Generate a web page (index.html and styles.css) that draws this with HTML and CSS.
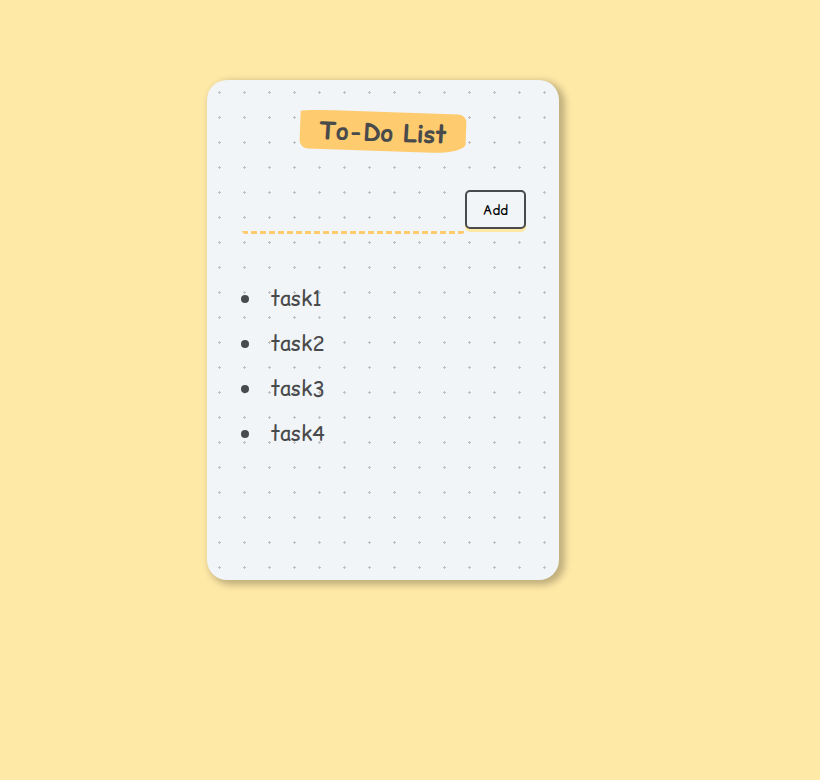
FILE: index.html
```html
<!DOCTYPE html>
<html lang="en">
<head>
<meta charset="utf-8">
<title>To-Do List</title>
<link rel="stylesheet" href="styles.css">
</head>
<body>
<main class="card">
  <h1 class="title"><span class="title-text">To-Do List</span></h1>
  <form class="entry">
    <input class="entry-input" type="text" aria-label="Task">
    <button class="entry-add" type="button"><span class="add-text">Add</span></button>
  </form>
  <ul class="tasks">
    <li class="task"><span class="task-text">task1</span></li>
    <li class="task"><span class="task-text">task2</span></li>
    <li class="task"><span class="task-text">task3</span></li>
    <li class="task"><span class="task-text">task4</span></li>
  </ul>
</main>
</body>
</html>
```
FILE: styles.css
```css
* {
  box-sizing: border-box;
}

body {
  margin: 0;
  min-height: 100vh;
  padding: 80px 0 0 207px;
  background: #ffe9a7;
  color: #494a4b;
  font-family: "Comic Sans MS", "Comic Relief", cursive;
}

.card {
  width: 352px;
  height: 500px;
  padding: 32px 33px 0 35px;
  border-radius: 20px;
  background-color: #f1f5f8;
  background-image: radial-gradient(#bfc0c1 7.2%, transparent 0);
  background-size: 25px 25px;
  box-shadow: 4px 3px 7px 2px #00000040;
  display: flex;
  flex-direction: column;
}

.title {
  align-self: center;
  display: flex;
  align-items: center;
  justify-content: center;
  width: 166px;
  height: 39px;
  margin: 0 2px 0 0;
  padding-top: 2px;
  border-radius: 20% 5% 20% 5% / 5% 20% 25% 20%;
  background: #fecb6e;
  font-size: 24px;
  font-weight: bold;
  line-height: 37px;
  white-space: nowrap;
  transform: rotate(2deg);
}

.entry {
  display: flex;
  align-items: flex-start;
  height: 44px;
  margin-top: 39px;
}

.entry-input {
  width: 223px;
  height: 44px;
  padding: 0 4px;
  border: 0;
  border-radius: 4px;
  background: repeating-linear-gradient(90deg, #fecb6e 0 6.4px, transparent 6.4px 9px) bottom / 100% 3px no-repeat;
  color: inherit;
  font: inherit;
  outline: none;
}

.entry-add {
  width: 61px;
  height: 39px;
  padding: 2px 0 0;
  border: 2px solid #494a4b;
  border-radius: 5px;
  background: #f1f5f8;
  box-shadow: 0 3px 0 #ffe8a6;
  color: #000;
  font-family: inherit;
  font-size: 13.33px;
}

.tasks {
  margin: 42px 0 0;
  padding: 0;
  list-style: none;
}

.task {
  display: flex;
  align-items: center;
  height: 45px;
  font-size: 20.8px;
}

.task::before {
  content: "";
  width: 8px;
  height: 8px;
  margin: 1px 21.4px 0 -1px;
  border-radius: 50%;
  background: #494a4b;
}
```
